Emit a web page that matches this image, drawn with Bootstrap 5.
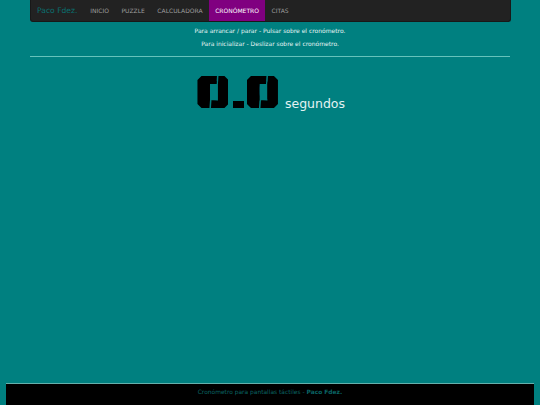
<!DOCTYPE html>
<html lang="es">
<head>
<meta charset="utf-8">
<title>Cronómetro</title>
<link rel="stylesheet" href="https://cdn.jsdelivr.net/npm/bootstrap@5.3.0/dist/css/bootstrap.min.css">
<style>
html, body { height: 100%; }
body { background: #008080; font-family: "DejaVu Sans", sans-serif; color: #fff; font-size: 6px; overflow: hidden; }
.page-shell { height: 405px; }
.top-bar { --bs-navbar-nav-link-padding-x: 6.3px; margin: 0 29.5px; height: 22px; background: #222; border: 1px solid #181818; border-top: 0; border-radius: 0 0 3px 3px; padding: 0; justify-content: flex-start; }
.top-bar .navbar-brand { color: #0a7070; font-size: 7.6px; padding: 0; margin: 0 6.5px 0 6.5px; line-height: 21px; }
.top-bar .nav-link { color: #9d9d9d; font-size: 6px; padding-top: 0; padding-bottom: 0; line-height: 21px; text-transform: uppercase; }
.top-bar .nav-link.active { background: #800080; color: #fff; }
.hint-line { margin: 0; text-align: center; line-height: 7px; color: #e4f3f3; }
.hint-box { margin: 0 30px; padding-top: 5px; display: flex; flex-direction: column; gap: 6px; }
.rule-line { margin: 9px 30px 0; border: 0; border-top: 1px solid #66c2bb; opacity: 1; }
.timer-row { margin-top: 18px; height: 36px; justify-content: center; align-items: flex-end; padding-left: 2.5px; }
.timer-digits { display: flex; height: 32px; align-items: flex-end; margin-bottom: 3px; }
.stencil-zero { display: block; width: 31px; height: 32px; background: #000; color: #000; font-size: 28px; line-height: 32px; text-align: center; font-weight: 700;
  clip-path: path("M4 0H19.5L19 8H12.5V24.5L12 32H4L0 28V4Z M21 0H27L31 4V28L27 32H13.5L14 24.5H20.5V8Z"); }
.stencil-dot { display: block; width: 11.5px; height: 7px; margin: 0 2.5px 0 4.5px; background: #000; color: #000; font-size: 6px; line-height: 7px; overflow: hidden; text-align: center; }
.timer-unit { color: #e4f3f3; font-size: 12.5px; line-height: 16px; margin-left: 7px; margin-bottom: -1px; }
.bottom-bar { background: #000; border-top: 1px solid #66b0ac; margin: 0 6px; height: 22px; text-align: center; color: #0a6464; line-height: 16px; font-size: 5.93px; }
</style>
</head>
<body>
<div class="page-shell d-flex flex-column">
  <nav class="navbar navbar-expand top-bar">
    <a class="navbar-brand" href="#">Paco Fdez.</a>
    <ul class="navbar-nav">
      <li class="nav-item"><a class="nav-link" href="#">Inicio</a></li>
      <li class="nav-item"><a class="nav-link" href="#">Puzzle</a></li>
      <li class="nav-item"><a class="nav-link" href="#">Calculadora</a></li>
      <li class="nav-item"><a class="nav-link active" href="#">Cronómetro</a></li>
      <li class="nav-item"><a class="nav-link" href="#">Citas</a></li>
    </ul>
  </nav>
  <div class="hint-box">
    <p class="hint-line">Para arrancar / parar - Pulsar sobre el cronómetro.</p>
    <p class="hint-line">Para inicializar - Deslizar sobre el cronómetro.</p>
  </div>
  <hr class="rule-line">
  <div class="d-flex timer-row">
    <span class="timer-digits"><span class="stencil-zero">0</span><span class="stencil-dot">.</span><span class="stencil-zero">0</span></span>
    <span class="timer-unit">segundos</span>
  </div>
  <div class="flex-grow-1"></div>
  <footer class="bottom-bar">Cronómetro para pantallas táctiles - <strong>Paco Fdez.</strong></footer>
</div>
<script src="https://cdn.jsdelivr.net/npm/bootstrap@5.3.0/dist/js/bootstrap.bundle.min.js"></script>
</body>
</html>
